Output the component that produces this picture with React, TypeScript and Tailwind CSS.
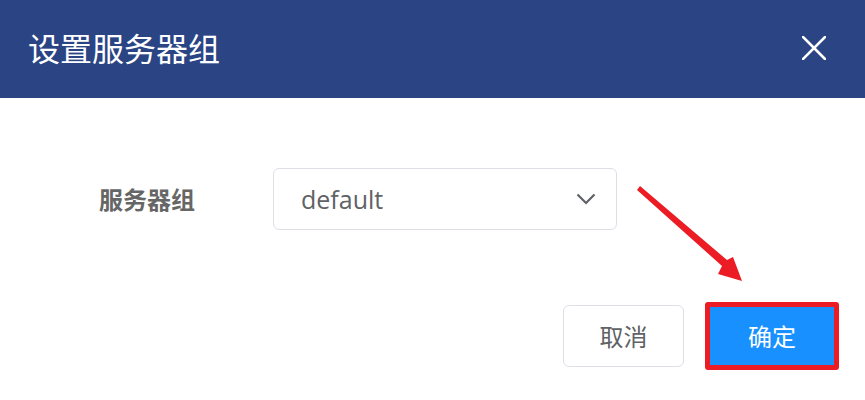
import React from 'react';

const cjk = { fontFamily: '"Noto Sans CJK SC", "Noto Sans", sans-serif' };
const latin = { fontFamily: '"Open Sans", "Noto Sans CJK SC", sans-serif' };

const ServerGroupDialog: React.FC = () => {
  return (
    <div className="w-[865px] h-[400px] bg-white relative overflow-hidden" style={cjk}>
      <div className="h-[98px] bg-[#2a4484] flex items-center justify-between pl-[28px] pr-[39px]">
        <div className="text-white text-[32px] leading-none pb-[4px]">设置服务器组</div>
        <svg width="24" height="24" viewBox="0 0 24 24" className="mt-[-2px]">
          <path d="M1 1 L23 23 M23 1 L1 23" stroke="#fff" strokeWidth="2.6" strokeLinecap="square" />
        </svg>
      </div>

      <div className="flex items-center pl-[99px] pt-[70px]">
        <div className="w-[174px] text-[24px] font-bold text-[#666] leading-none">服务器组</div>
        <div className="w-[344px] h-[62px] border border-[#dcdfe6] rounded-[6px] flex items-center justify-between pl-[27px] pr-[20px]">
          <span className="text-[25px] text-[#606266] leading-none" style={latin}>default</span>
          <svg width="20" height="12" viewBox="0 0 20 12">
            <path d="M1.5 1.5 L10 10 L18.5 1.5" stroke="#5f6166" strokeWidth="2.2" fill="none" />
          </svg>
        </div>
      </div>

      <div className="flex items-center justify-end pr-[26px] mt-[72px]">
        <button className="w-[121px] h-[62px] border border-[#dcdfe6] rounded-[6px] bg-white text-[24px] text-[#606266] flex items-center justify-center">
          取消
        </button>
        <div className="ml-[21px] border-[5px] border-[#ec1c24] rounded-[3px] bg-[#ec1c24]">
          <button className="w-[124px] h-[58px] bg-[#1890ff] text-white text-[24px] flex items-center justify-center">
            确定
          </button>
        </div>
      </div>

      <svg className="absolute left-0 top-0 pointer-events-none" width="865" height="400">
        <polygon points="637,190 640,186 727,260 733,257 742,281 718,274 722,266" fill="#ec1c24" />
      </svg>
    </div>
  );
};

export default function App() {
  return <ServerGroupDialog />;
}
